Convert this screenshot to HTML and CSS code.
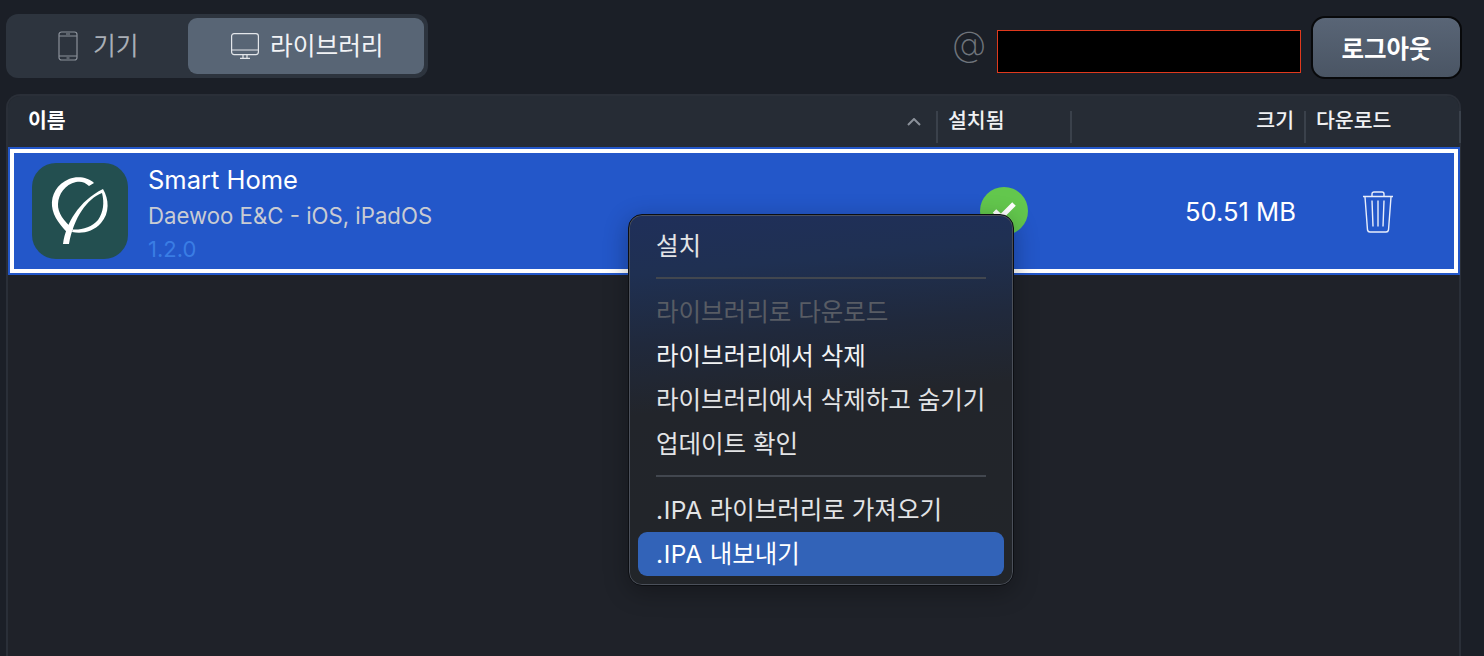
FILE: index.html
```html
<!DOCTYPE html>
<html lang="ko">
<head>
<meta charset="utf-8">
<title>라이브러리</title>
<link rel="stylesheet" href="styles.css">
</head>
<body>
<div class="topbar">
  <div class="tabs">
    <div class="tab tab-device">
      <svg class="icon-tablet" width="20" height="30" viewBox="0 0 20 30" fill="none" stroke="#8b919a" stroke-width="1.2">
        <rect x="1" y="1" width="18" height="28" rx="2.5"/>
        <path d="M1 5h18M1 25h18M8 3h4M8.500 27h3"/>
      </svg>
      <span>기기</span>
    </div>
    <div class="tab tab-active">
      <svg class="icon-desktop" width="28" height="26" viewBox="0 0 28 26" fill="none" stroke="#e3e6ea" stroke-width="1.2">
        <rect x=".6" y=".6" width="26.8" height="21" rx="2.500"/>
        <path d="M.6 17h26.800M12 22v3M16 22v3M9 25.400h10"/>
      </svg>
      <span>라이브러리</span>
    </div>
  </div>
  <div class="account">
    <span class="at">@</span>
    <div class="redacted"></div>
    <button class="logout">로그아웃</button>
  </div>
</div>

<div class="panel">
  <div class="thead">
    <div class="th th-name"><span>이름</span>
      <svg class="sort" width="14" height="8" viewBox="0 0 14 8" fill="none" stroke="#8b919a" stroke-width="2"><path d="M1 7l6-6 6 6"/></svg>
    </div>
    <div class="th">설치됨</div>
    <div class="th th-size">크기</div>
    <div class="th">다운로드</div>
    <div class="th"></div>
  </div>
  <div class="row">
    <div class="cell-name">
      <svg class="app-icon" width="96" height="96" viewBox="0 0 96 96">
        <path fill="#fff" d="M62 20 C56 14 45 13 37 16 C25 21 19 32 20 43 C21 54 29 63 37.500 72 L41 66 C32 58 25.500 50 26 41 C26.500 31 33 21.500 44 19 C49 18 53 19 57 23 Z"/>
        <path fill="#fff" d="M71 26 C77 36 78 50 69 60 C61 69 50 71 40 69 L41 66.500 C50 67 60 64 66 57 C71.500 49 72.500 40 70 30 C55 36 42 54 37 81 L31 81 C34 60 47 38 71 26 Z"/>
      </svg>
      <div class="app-text">
        <div class="app-title">Smart Home</div>
        <div class="app-sub">Daewoo E&amp;C - iOS, iPadOS</div>
        <div class="app-ver">1.2.0</div>
      </div>
    </div>
    <div class="cell-check">
      <svg width="48" height="48" viewBox="0 0 48 48">
        <circle cx="24" cy="24" r="24" fill="#63c74d"/>
        <path d="M14.500 24l6.500 6L34 17" fill="none" stroke="#fff" stroke-width="5"/>
      </svg>
    </div>
    <div class="cell-size">50.51 MB</div>
    <div class="cell-trash">
      <svg width="32" height="42" viewBox="0 0 32 42" fill="none" stroke="#e9eefb" stroke-width="1.400">
        <path d="M1 5.500h30M10 5V3a2 2 0 0 1 2-2h8a2 2 0 0 1 2 2v2"/>
        <path d="M3 6l2.500 33a2.500 2.500 0 0 0 2.500 2h16a2.500 2.500 0 0 0 2.500-2L29 6"/>
        <path d="M10 9.500l1 26M16 9.500v26M22 9.500l-1 26"/>
      </svg>
    </div>
  </div>
</div>

<div class="menu">
  <div class="item">설치</div>
  <div class="sep"></div>
  <div class="item item-off">라이브러리로 다운로드</div>
  <div class="item item-strong">라이브러리에서 삭제</div>
  <div class="item">라이브러리에서 삭제하고 숨기기</div>
  <div class="item">업데이트 확인</div>
  <div class="sep"></div>
  <div class="item"><span class="latin">.IPA</span> 라이브러리로 가져오기</div>
  <div class="item item-hl"><span class="latin">.IPA</span> 내보내기</div>
</div>
</body>
</html>
```

FILE: styles.css
```css
* { box-sizing: border-box; }
html, body { height: 100%; }
body {
  margin: 0;
  padding: 14px 23px 0 6px;
  height: 656px;
  overflow: hidden;
  position: relative;
  background: #1b1f27;
  color: #fff;
  font-family: Inter, "Noto Sans CJK KR", sans-serif;
}
.topbar { display: flex; justify-content: space-between; height: 64px; }
.tabs {
  width: 422px;
  height: 64px;
  padding: 4px;
  display: flex;
  border-radius: 12px;
  background: #2d343e;
}
.tab {
  display: flex;
  align-items: center;
  font-size: 24.700px;
  line-height: 56px;
}
.tab-device { width: 178px; padding-left: 48px; gap: 15px; color: #a9aeb5; }
.tab-active {
  width: 236px;
  padding-left: 43px;
  gap: 11px;
  color: #f2f3f5;
  border-radius: 9px;
  background: #586575;
}
.account { display: flex; align-items: flex-start; margin-right: -1px; }
.at {
  width: 43px;
  margin-top: 6px;
  font-family: Inter, sans-serif;
  font-size: 35px;
  line-height: 46px;
  font-weight: 200;
  text-indent: -2px;
  color: #6f747b;
}
.redacted {
  width: 304px;
  height: 43px;
  margin-top: 16px;
  background: #000;
  border: 1px solid #e0391d;
}
.logout {
  width: 151px;
  height: 63px;
  margin: 2px 0 0 10px;
  border: 2.500px solid #08090b;
  border-radius: 14px;
  background: linear-gradient(#596576, #4a5564);
  color: #fff;
  font: 700 24.500px Inter, "Noto Sans CJK KR", sans-serif;
}
.panel {
  margin-top: 16px;
  height: 562px;
  border: 2px solid #2a2f38;
  border-bottom: 0;
  border-radius: 14px 14px 0 0;
  background: #1f2229;
}
.thead {
  height: 51px;
  display: grid;
  grid-template-columns: 928px 134px 234px 155px 1fr;
  align-items: center;
  padding-top: 10px;
  background: #262c35;
  border-radius: 12px 12px 0 0;
  font-size: 20.500px;
}
.th {
  height: 32px;
  line-height: 20px;
  padding-left: 10px;
  font-weight: 500;
  color: #f0f1f3;
  border-left: 2px solid #3a414b;
}
.th-name {
  display: flex;
  justify-content: space-between;
  align-items: flex-start;
  padding: 0 15px 0 20px;
  border-left: 0;
  color: #fff;
  font-weight: 700;
}
.sort { margin-top: 7px; }
.th-size { text-align: right; padding-right: 10px; }
.row {
  height: 124px;
  margin: 2px 1px 0 2px;
  display: grid;
  grid-template-columns: 922px 134px 234px 1fr;
  align-items: center;
  border: 4px solid #fff;
  background: #2357c9;
  box-shadow: 0 0 0 2px #2357c9;
}
.cell-name { display: flex; align-items: center; gap: 20px; padding-left: 18px; }
.app-icon { background: #234f50; border-radius: 24px; display: block; }
.app-text { margin-top: 5px; }
.app-title { font-size: 25.500px; line-height: 36px; color: #fff; }
.app-sub { font-size: 22.200px; line-height: 36px; color: #c9ccd3; }
.app-ver { font-size: 22px; line-height: 30px; margin-bottom: 2px; color: #3a7de4; }
.cell-check { padding-left: 44px; }
.cell-check svg { display: block; }
.cell-size { text-align: right; padding-right: 8px; font-size: 25.600px; font-weight: 400; color: #fff; }
.cell-trash { padding: 2px 0 0 58px; }
.cell-trash svg { display: block; }
.menu {
  position: absolute;
  left: 628px;
  top: 214px;
  width: 386px;
  height: 372px;
  padding-top: 9px;
  border: 1px solid #0c0e12;
  border-radius: 14px;
  background: linear-gradient(175deg, #1f2f5a 0, #1f3052 60px, #20293c 130px, #22252b 200px, #222529 100%);
  box-shadow: inset 0 0 0 1px #4b505a, 0 6px 24px rgba(0, 0, 0, .3);
}
.item {
  height: 44px;
  margin: 0 9px;
  padding-left: 18px;
  border-radius: 9px;
  font-size: 24.500px;
  line-height: 45px;
  color: #e3e4e6;
  white-space: nowrap;
}
.latin { letter-spacing: .6px; }
.item-off { color: #585c64; }
.item-strong { color: #f2f3f4; }
.item-hl { background: #3263b8; color: #fff; }
.sep { height: 2px; margin: 9px 27px 11px 27px; background: #42474f; }
```
